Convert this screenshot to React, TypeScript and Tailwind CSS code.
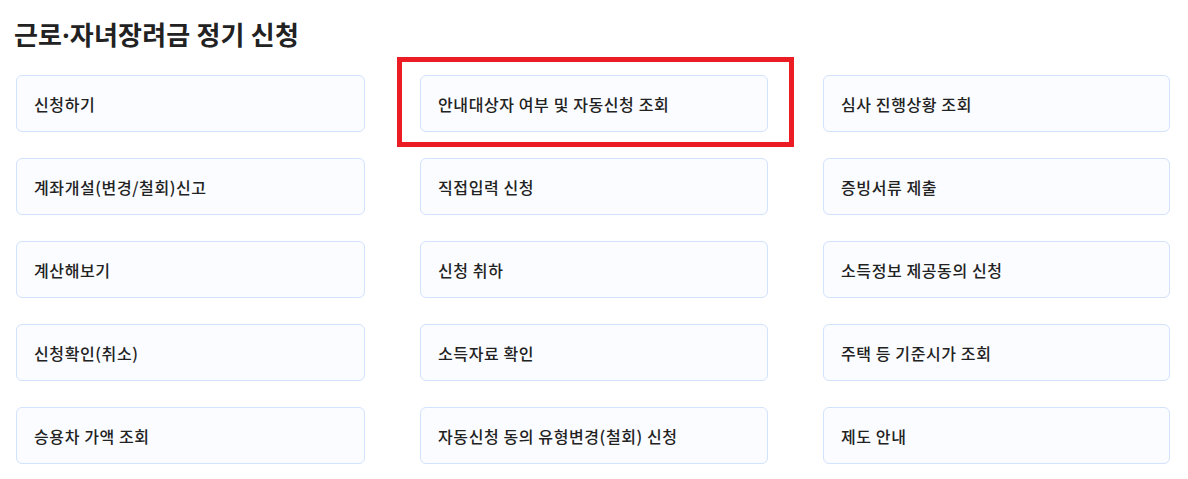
import React from "react";

const items: string[] = [
  "신청하기",
  "안내대상자 여부 및 자동신청 조회",
  "심사 진행상황 조회",
  "계좌개설(변경/철회)신고",
  "직접입력 신청",
  "증빙서류 제출",
  "계산해보기",
  "신청 취하",
  "소득정보 제공동의 신청",
  "신청확인(취소)",
  "소득자료 확인",
  "주택 등 기준시가 조회",
  "승용차 가액 조회",
  "자동신청 동의 유형변경(철회) 신청",
  "제도 안내",
];

export default function App() {
  return (
    <div
      className="w-[1188px] h-[479px] bg-white overflow-hidden px-[16px] pt-[17px]"
      style={{ fontFamily: '"Noto Sans CJK KR", "Noto Sans", sans-serif' }}
    >
      <h1 className="h-[34px] -ml-[2px] text-[26px] leading-[34px] font-bold text-[#222222] tracking-[0.2px] overflow-visible">
        근로<span className="font-['Noto_Sans',sans-serif] leading-[34px]">·</span>자녀장려금 정기 신청
      </h1>
      <div className="mt-[24px] grid grid-cols-[349px_348px_347px] gap-x-[55px] gap-y-[26px]">
        {items.map((t, i) => (
          <div key={i} className="relative">
            <div className="h-[57px] rounded-[6px] border border-[#d3e2fd] bg-[#fafcff] flex items-center pl-[17px] text-[16px] font-medium text-[#222222] tracking-[0.6px]">
              {t}
            </div>
            {i === 1 && (
              <div className="absolute -left-[23px] -top-[18px] w-[397px] h-[90px] border-[5px] border-[#ec1c24] pointer-events-none" />
            )}
          </div>
        ))}
      </div>
    </div>
  );
}
